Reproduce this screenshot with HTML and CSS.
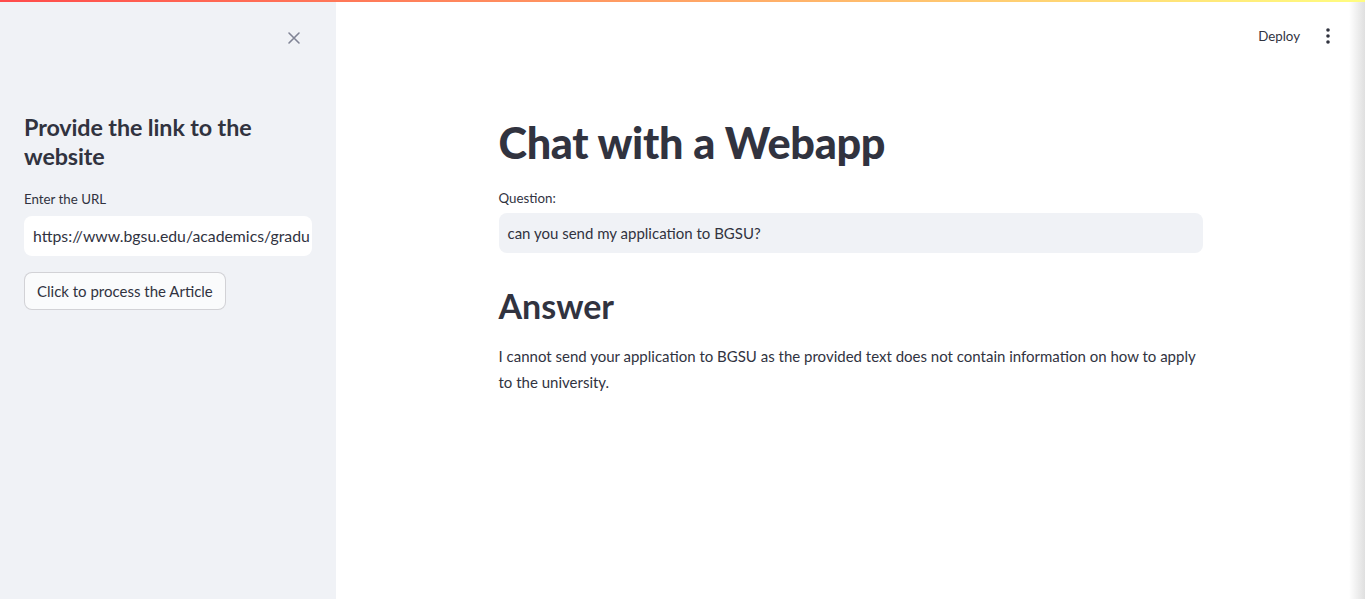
FILE: index.html
```html
<!DOCTYPE html>
<html lang="en">
<head>
<meta charset="utf-8">
<title>Chat with a Webapp</title>
<link rel="stylesheet" href="styles.css">
</head>
<body>
<div class="decoration"></div>
<div class="app">
  <aside class="sidebar">
    <div class="sidebar-top">
      <button class="close-btn" aria-label="Close sidebar">
        <svg width="14" height="14" viewBox="0 0 14 14"><path d="M2 2 L12 12 M12 2 L2 12" stroke="#808495" stroke-width="1.6" stroke-linecap="round" fill="none"/></svg>
      </button>
    </div>
    <div class="sidebar-content">
      <h2 class="side-title">Provide the link to the website</h2>
      <label class="field-label">Enter the URL</label>
      <div class="side-input">https://www.bgsu.edu/academics/gradu</div>
      <button class="btn">Click to process the Article</button>
    </div>
  </aside>
  <main class="main">
    <header class="topbar">
      <span class="deploy">Deploy</span>
      <span class="kebab">
        <svg width="4" height="16" viewBox="0 0 4 16"><circle cx="2" cy="2" r="1.8" fill="#31333f"/><circle cx="2" cy="8" r="1.8" fill="#31333f"/><circle cx="2" cy="14" r="1.8" fill="#31333f"/></svg>
      </span>
    </header>
    <section class="block">
      <h1 class="title">Chat with a Webapp</h1>
      <label class="field-label q-label">Question:</label>
      <div class="main-input">can you send my application to BGSU?</div>
      <h2 class="answer-title">Answer</h2>
      <p class="answer">I cannot send your application to BGSU as the provided text does not contain information on how to apply to the university.</p>
    </section>
    <div class="scroll-shade"></div>
  </main>
</div>
</body>
</html>
```
FILE: styles.css
```css
* { box-sizing: border-box; }
html, body { margin: 0; padding: 0; height: 100%; }
body {
  font-family: "Lato", "Noto Sans", sans-serif;
  color: #31333f;
  background: #ffffff;
  overflow: hidden;
}
.decoration {
  position: absolute;
  top: 0; left: 0; right: 0;
  height: 2px;
  background: linear-gradient(90deg, #ff4b4b, #fffd80);
  z-index: 5;
}
.app { display: flex; height: 100vh; }
.sidebar {
  width: 336px;
  flex: 0 0 336px;
  background: #f0f2f6;
  display: flex;
  flex-direction: column;
}
.sidebar-top {
  display: flex;
  justify-content: flex-end;
  padding: 31px 35px 0 0;
  height: 113px;
}
.close-btn {
  border: 0; background: transparent; padding: 0;
  width: 14px; height: 14px;
  display: flex;
}
.sidebar-content { padding: 0 24px; display: flex; flex-direction: column; align-items: flex-start; }
.side-title {
  margin: 0 0 19px;
  font-size: 23.3px;
  font-weight: 700;
  line-height: 29px;
  letter-spacing: -0.1px;
  width: 270px;
}
.field-label {
  font-size: 13.3px;
  line-height: 18px;
  margin-bottom: 8px;
  display: block;
}
.q-label { margin-bottom: 6px; }
.side-input {
  width: 288px;
  height: 40px;
  background: #ffffff;
  border-radius: 8px;
  padding: 0 9px;
  font-size: 15.8px;
  line-height: 40px;
  white-space: nowrap;
  overflow: hidden;
  margin-bottom: 16px;
}
.btn {
  font-family: inherit;
  font-size: 15px;
  color: #31333f;
  background: #fafbfc;
  border: 1px solid rgba(49,51,63,0.2);
  border-radius: 8px;
  height: 38px;
  padding: 0 12px;
}
.main { flex: 1; position: relative; display: flex; flex-direction: column; }
.topbar {
  display: flex;
  justify-content: flex-end;
  align-items: center;
  height: 72px;
  padding: 0 35px 0 0;
  gap: 26px;
}
.deploy { font-size: 13.3px; }
.kebab { display: flex; }
.block {
  width: 704px;
  margin: 0 auto;
  padding-top: 40px;
}
.title {
  margin: 0 0 17px;
  font-size: 43.2px;
  font-weight: 900;
  line-height: 60px;
  letter-spacing: -0.3px;
}
.main-input {
  height: 40px;
  background: #f0f2f6;
  border-radius: 8px;
  padding: 0 9px;
  font-size: 15px;
  line-height: 40px;
}
.answer-title {
  margin: 32px 0 16px;
  font-size: 34px;
  font-weight: 700;
  line-height: 42px;
}
.answer {
  margin: 0;
  font-size: 15px;
  line-height: 26px;
}
.scroll-shade {
  position: absolute;
  top: 0; right: 0; bottom: 0;
  width: 16px;
  background: linear-gradient(90deg, rgba(255,255,255,0), rgba(220,220,220,0.9));
}
```
